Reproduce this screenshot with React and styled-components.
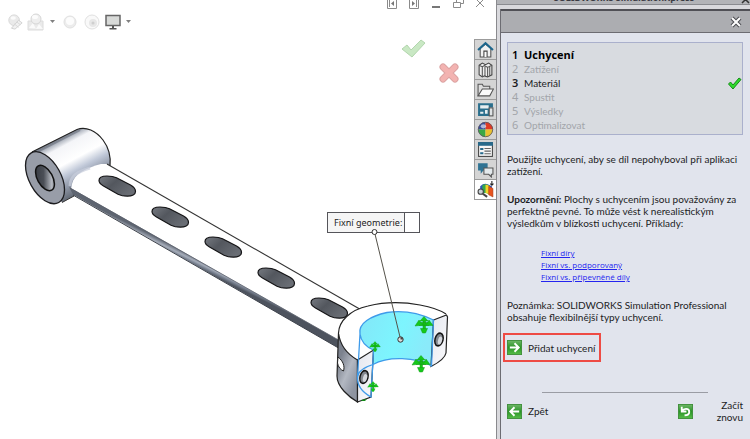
import { useState } from 'react';
import styled, { createGlobalStyle, css } from 'styled-components';

const GlobalStyle = createGlobalStyle`
  * {
    box-sizing: border-box;
  }
  body {
    margin: 0;
    background: #fff;
    color: #1c1c24;
    font-family: Lato, 'Noto Sans', sans-serif;
    font-size: 10px;
  }
  button {
    margin: 0;
    padding: 0;
    border: 0;
    background: none;
    color: inherit;
    font: inherit;
    cursor: pointer;
  }
  svg {
    display: block;
  }
`;

const Page = styled.div`
  display: flex;
  min-height: 100vh;
  overflow: hidden;
`;

const Workspace = styled.main`
  flex: 1;
  display: flex;
  flex-direction: column;
  min-width: 0;
`;

const TopBar = styled.header`
  display: flex;
  justify-content: space-between;
  height: 39px;
`;

const ViewTools = styled.div`
  display: flex;
  align-items: center;
  padding: 4px 0 0 7px;
`;

const ViewTool = styled.button`
  display: flex;
  align-items: center;
  margin-right: ${(props) => props.$gap || 4}px;
  opacity: ${(props) => (props.$faded ? 0.4 : 1)};
`;

const WindowTools = styled.div`
  display: flex;
  align-items: flex-start;
  gap: 8px;
  padding-right: 8px;
`;

const Body = styled.div`
  flex: 1;
  display: flex;
`;

const Canvas = styled.section`
  position: relative;
  flex: 1;
  min-width: 0;
`;

const Model = styled.svg`
  position: absolute;
  top: 0;
  left: 0;
`;

const Confirm = styled.button`
  position: absolute;
  top: ${(props) => props.$top}px;
  left: ${(props) => props.$left}px;
`;

const Callout = styled.label`
  position: absolute;
  top: 173px;
  left: 327px;
  display: flex;
  align-items: center;
  height: 21px;
  padding-left: 6px;
  border: 1px solid #55555a;
  background: #f5f5f5;
  font-family: 'Noto Sans', sans-serif;
  font-size: 9px;
  white-space: nowrap;
`;

const CalloutInput = styled.input`
  align-self: stretch;
  width: 15px;
  margin-left: 2px;
  padding: 0;
  border: 0;
  border-left: 1px solid #55555a;
  background: #fff;
  font: inherit;
  outline: none;
`;

const Leader = styled(Model)`
  pointer-events: none;
`;

const Tabs = styled.nav`
  display: flex;
  flex-direction: column;
  width: 22px;
`;

const Tab = styled.button`
  display: flex;
  align-items: center;
  justify-content: center;
  height: 20px;
  border: 1px solid #9b9b9b;
  border-bottom: 0;
  border-right: 0;
  background: #d5d5d5;
  ${(props) =>
    props.$active &&
    css`
      height: 21px;
      border-bottom: 1px solid #9b9b9b;
      background: #fff;
    `}
`;

const Panel = styled.aside`
  display: flex;
  flex-direction: column;
  width: 254px;
  border-left: 1px solid #8a8a8e;
  background: #d9d9dd;
`;

const PanelTitle = styled.div`
  display: flex;
  align-items: flex-end;
  height: 5px;
  border-bottom: 1px solid #8a8b90;
  background: #b3b4b8;
  color: #3a3a42;
  font-family: 'Noto Sans', sans-serif;
  font-size: 9px;
  font-weight: 700;
  line-height: 12px;
  overflow: hidden;
`;

const PanelName = styled.span`
  flex: 1;
  padding-left: 10px;
  text-align: center;
`;

const PanelFrame = styled.div`
  flex: 1;
  display: flex;
  flex-direction: column;
  margin: 4px 0 0 3px;
  border-left: 1px solid #6c6c72;
  background: #e1e4ed;
`;

const PanelHead = styled.div`
  display: flex;
  align-items: center;
  justify-content: flex-end;
  height: 24px;
  padding-right: 8px;
  border-top: 2px solid #505056;
  border-bottom: 1px solid #6c6c72;
  background: #acadb1;
`;

const PanelBody = styled.div`
  display: flex;
  flex-direction: column;
  padding: 9px 7px 0 6px;
  line-height: 12px;
`;

const Steps = styled.ol`
  margin: 0 0 18px;
  padding: 5px 0 2px 4px;
  border: 1px solid #aab0cc;
  background: #d8dbe0;
  list-style: none;
`;

const Step = styled.li`
  display: flex;
  align-items: center;
  height: 14px;
  color: ${(props) => (props.$enabled ? '#1c1c24' : '#a2a5aa')};
  ${(props) =>
    props.$current &&
    css`
      color: #000;
      font-family: 'Open Sans', sans-serif;
      font-size: 11px;
      font-weight: 700;
    `}
`;

const StepNumber = styled.span`
  width: 12px;
  font-family: 'Noto Sans', sans-serif;
  font-size: 11px;
  font-weight: ${(props) => (props.$strong ? 600 : 400)};
`;

const StepName = styled.span`
  flex: 1;
`;

const Text = styled.p`
  margin: 0 0 ${(props) => props.$gap || 16}px;
`;

const Links = styled.div`
  display: flex;
  flex-direction: column;
  align-items: flex-start;
  margin: 2px 0 16px 34px;
`;

const HelpLink = styled.a`
  color: #2424f0;
  font-family: 'Open Sans', sans-serif;
  font-size: 8px;
`;

const Action = styled.button`
  display: flex;
  align-items: center;
  gap: 6px;
  text-align: right;
`;

const Highlighted = styled(Action)`
  align-self: flex-start;
  height: 29px;
  margin-left: -4px;
  padding: 0 4px 0 2px;
  border: 2px solid #ee4b44;
`;

const Divider = styled.hr`
  width: 70%;
  margin: 30px auto 6px;
  border: 0;
  border-top: 1px solid #9a9ca4;
`;

const Footer = styled.footer`
  display: flex;
  align-items: center;
  justify-content: space-between;
`;

const RestartLabel = styled.span`
  width: 44px;
`;

const Dropdown = () => (
  <svg width="5" height="3" viewBox="0 0 5 3">
    <path d="M0 0h5L2.5 3z" fill="#808080" />
  </svg>
);

const AppearanceIcon = () => (
  <svg width="16" height="18" viewBox="0 0 18 18">
    <circle cx="8" cy="7" r="6" fill="#ccc" stroke="#999" />
    <ellipse cx="7" cy="4.500" rx="3" ry="2" fill="#f6f6f6" />
    <path d="M5 16l8-9 4 3-8 7z" fill="#ddd" stroke="#888" />
    <path d="M8 11l5 4M11 9l4 3" stroke="#999" />
  </svg>
);

const SceneIcon = () => (
  <svg width="18" height="18" viewBox="0 0 18 18">
    <path d="M1 8h15v9H1z" fill="#ccc" stroke="#aaa" />
    <path d="M2 15l4-5 3 6 3-5 4 5z" fill="#f4f4f4" />
    <circle cx="9" cy="6" r="5" fill="#d6d6d6" stroke="#999" />
    <ellipse cx="8" cy="4" rx="3" ry="2" fill="#fafafa" />
  </svg>
);

const SphereIcon = ({ ring }) => (
  <svg width="16" height="16" viewBox="0 0 16 16">
    <circle cx="8" cy="8" r={ring ? 7 : 6} fill={ring ? '#f2f2f2' : '#d2d2d2'} stroke="#b4b4b4" />
    <circle cx={ring ? 9 : 8} cy={ring ? 9 : 7} r="4" fill={ring ? '#c4c4c4' : '#fafafa'} />
    {ring && <circle cx="9" cy="9" r="1.500" fill="#888" />}
  </svg>
);

const MonitorIcon = () => (
  <svg width="16" height="16" viewBox="0 0 16 16">
    <rect x="1" y="1.500" width="14" height="10" fill="#d8dad8" stroke="#666" strokeWidth="1.500" />
    <path d="M7 12h2v2h2.500v1.500h-7V14H7z" fill="#555" />
  </svg>
);

const windowIcons = [
  ['Panel vlevo', 'M1.500 -3v11.500h9V-3M3.500 -2v9', 'M8 1v5L5 3.500z'],
  ['Panel vpravo', 'M1.500 -3v11.500h9V-3M8.500 -2v9', 'M4 1v5l3-2.500z'],
  ['Minimalizovat', '', 'M2 6h8v2H2z'],
  ['Obnovit', 'M1.500 2.500h7v5h-7zM4.500 2.500v-4h7v5h-3', ''],
  ['Zavřít', 'M2-1l8 8M10-1L2 7', ''],
];

const tabs = [
  {
    name: 'Prostředky',
    icon: (
      <>
        <path d="M3 7v8h10V7L8 3z" fill="#f2f2f2" stroke="#555" />
        <path d="M1 8.500L8 2l7 6.500" fill="none" stroke="#1e668c" strokeWidth="2" />
        <path d="M6.500 15V9.500h3V15" fill="#fff" stroke="#444" />
      </>
    ),
  },
  {
    name: 'Knihovna návrhů',
    icon: (
      <>
        <path d="M2 4l3-2 3 1.500L11 2l3 2v9l-4 2-3-1-2 1-3-2z" fill="#efefef" stroke="#444" />
        <path d="M2 4l3 1.500V15M5 5.500L8 3.500M8 5l2 1V15M10 6l4-2M7.500 5v9M12 5v9" fill="none" stroke="#555" />
      </>
    ),
  },
  {
    name: 'Průzkumník',
    icon: (
      <>
        <path d="M1 14V3h4l1 2h6v3" fill="#ddd" stroke="#555" />
        <path d="M1 14L5 7.500h10.500L12 14z" fill="#fafafa" stroke="#555" />
      </>
    ),
  },
  {
    name: 'Paleta pohledů',
    icon: (
      <>
        <path d="M1 2h14v4h-3v8H1z" fill="#2b6f8d" />
        <path d="M3 4h8v3H3zM3 10h3v2H3zM7.500 8.500H10V12H7.500z" fill="#e8eef0" />
        <rect x="11.500" y="6.500" width="3.500" height="7.500" fill="#dfe3e5" stroke="#555" />
      </>
    ),
  },
  {
    name: 'Vzhledy',
    icon: (
      <>
        <path d="M8 8V1a7 7 0 0 0-7 7z" fill="#3a4f9d" />
        <path d="M8 8V1a7 7 0 0 1 7 7z" fill="#e03a24" />
        <path d="M8 8H1a7 7 0 0 0 7 7z" fill="#3aa845" />
        <path d="M8 8h7a7 7 0 0 1-7 7z" fill="#e9c22f" />
        <ellipse cx="6" cy="5" rx="2.500" ry="2" fill="#fff" opacity="0.6" />
        <circle cx="8" cy="8" r="6.800" fill="none" stroke="#5b5560" strokeWidth="0.800" />
      </>
    ),
  },
  {
    name: 'Vlastnosti',
    icon: (
      <>
        <rect x="1.500" y="1.500" width="13" height="13" fill="#f6f6f6" stroke="#444" />
        <path d="M1 1h14v3.500H1z" fill="#276a8c" />
        <path d="M7 7h6M7 9.500h6M7 12h6" stroke="#666" />
        <path d="M3 6.500h3v2H3zM3 10.500h3v2H3z" fill="#276a8c" />
      </>
    ),
  },
  {
    name: 'Fórum',
    icon: (
      <>
        <path d="M1 2h9v7H6l-2.500 3V9H1z" fill="#2f7393" />
        <path d="M6.500 6.500h8.500v6h-1.500V15L11 12.500H6.500z" fill="#e4eaed" stroke="#555" />
      </>
    ),
  },
  {
    name: 'SimulationXpress',
    icon: (
      <>
        <path d="M3 5C6 2 9 2 12 4l2 1v8l-3-1c-3-2-5-1-8 0z" fill="#2d55b8" />
        <path d="M5 4c2-1.500 5-1 7 1v8C9 11 7 11 5 12z" fill="#35a84a" />
        <path d="M8 3.500c2 0 3 .5 4 1.500v8c-1-1-2-1.500-4-1.500z" fill="#f1d22a" />
        <path d="M11 5l4 2v8l-4-2z" fill="#e8541f" stroke="#a33712" strokeWidth="0.500" />
        <path d="M14 0v4M12.500 2.500L14 4l1.500-1.500" fill="none" stroke="#222" />
        <circle cx="3.500" cy="10" r="2.500" fill="#c9d1d6" stroke="#444" />
        <path d="M5.500 12l4 3" stroke="#444" strokeWidth="2" />
      </>
    ),
  },
];

const actionPaths = {
  next: 'M3 8h9M8 3.500L12.500 8L8 12.500',
  back: 'M13 8H4M8 3.500L3.500 8L8 12.500',
  undo: 'M4 3v5h5M4 7.500C6 4.500 12 4 12 8.500c0 2.500-2 3.500-5 3.500',
};

const ActionIcon = ({ kind }) => (
  <svg width="15" height="15" viewBox="0 0 16 16">
    <defs>
      <linearGradient id={`green-${kind}`} x1="0" y1="0" x2="0" y2="1">
        <stop offset="0" stopColor="#6fb768" />
        <stop offset="0.500" stopColor="#2b9427" />
        <stop offset="1" stopColor="#57bd49" />
      </linearGradient>
    </defs>
    <rect x="0.500" y="0.500" width="15" height="15" fill={`url(#green-${kind})`} stroke="#3f8f3b" />
    <path d={actionPaths[kind]} fill="none" stroke="#fff" strokeWidth="2" />
  </svg>
);

const Fixture = ({ x, y, small }) => (
  <g transform={`translate(${x} ${y}) scale(${small ? 0.6 : 1})`} fill="#14c91a" stroke="#149a18" strokeWidth="0.500">
    <path d="M-1-5h2.500v5H-1zM-5-1.500H5v3H-5zM-1 1h2.500v5H-1z" />
    <path d="M0-7.500l4 4.500h-8zM-9 2l4-6 4 5zM9 1.500L5-4 2 1.500zM-3.500 4.500h7L1.500 9h-3z" />
  </g>
);

const slots = [
  [117, 186],
  [170, 217],
  [223, 247],
  [276, 278],
  [329, 308],
];

const PartModel = () => (
  <Model width="475" height="400" viewBox="0 39 475 400" role="img" aria-label="Model dílu">
    <defs>
      <linearGradient id="barrel" gradientUnits="userSpaceOnUse" x1="55" y1="138" x2="84" y2="192">
        <stop offset="0" stopColor="#555b66" />
        <stop offset="0.080" stopColor="#a9afba" />
        <stop offset="0.180" stopColor="#f4f5f8" />
        <stop offset="0.450" stopColor="#ffffff" />
        <stop offset="0.620" stopColor="#c0c8d8" />
        <stop offset="0.800" stopColor="#8f97a6" />
        <stop offset="1" stopColor="#5d646f" />
      </linearGradient>
      <linearGradient id="bore" x1="0" y1="0" x2="1" y2="1">
        <stop offset="0" stopColor="#30343b" />
        <stop offset="0.450" stopColor="#4b4f57" />
        <stop offset="0.750" stopColor="#b4b8c0" />
        <stop offset="1" stopColor="#5b5f67" />
      </linearGradient>
      <linearGradient id="slot" x1="0" y1="0" x2="1" y2="0.600">
        <stop offset="0" stopColor="#777b82" />
        <stop offset="0.450" stopColor="#53575e" />
        <stop offset="1" stopColor="#696d74" />
      </linearGradient>
      <linearGradient id="side" gradientUnits="userSpaceOnUse" x1="200" y1="259" x2="196" y2="267">
        <stop offset="0" stopColor="#5e6571" />
        <stop offset="0.450" stopColor="#a6adba" />
        <stop offset="0.700" stopColor="#77808f" />
        <stop offset="1" stopColor="#4d535e" />
      </linearGradient>
      <linearGradient id="clamp" gradientUnits="userSpaceOnUse" x1="337" y1="365" x2="360" y2="375">
        <stop offset="0" stopColor="#7c828e" />
        <stop offset="0.500" stopColor="#b3b8c2" />
        <stop offset="1" stopColor="#8e94a1" />
      </linearGradient>
      <linearGradient id="face" x1="0" y1="0" x2="1" y2="1">
        <stop offset="0" stopColor="#e4e7ef" />
        <stop offset="1" stopColor="#fafafc" />
      </linearGradient>
      <linearGradient id="selected" x1="0" y1="0" x2="1" y2="0.300">
        <stop offset="0" stopColor="#83e6f8" />
        <stop offset="0.600" stopColor="#7df5fe" />
        <stop offset="1" stopColor="#8aeafa" />
      </linearGradient>
    </defs>

    <path
      d="M32 152L77 129.500C86 126 96 131 103 140C109 148 111 157 110 166L100 175L74 196L62 202.500Z"
      fill="url(#barrel)"
    />
    <path d="M32 152L77 129.500C86 126 96 131 103 140C109 148 111 157 110 166" fill="none" stroke="#222" strokeWidth="1.200" />
    <path d="M37 152L80 130" stroke="#6c727e" strokeWidth="2" opacity="0.6" />
    <path d="M62 202.500L74 196" stroke="#333" />

    <path d="M72 184C74 174 86 168 101 164L107 164L364 311L342 343L71 189Z" fill="#fff" />
    <path d="M70 186C70 177 76 172 90 168" fill="none" stroke="#c9cfdd" strokeWidth="3" opacity="0.7" />
    <path d="M107 164L364 311.500" stroke="#333" strokeWidth="1.100" />
    <path d="M69 187L342 342V350L73 194.500Z" fill="url(#side)" />
    <path d="M73 195L342 350" stroke="#3d424b" />
    <path d="M70 188L342 342" stroke="#5a606b" strokeWidth="0.800" />

    <ellipse cx="45" cy="177.700" rx="15.800" ry="28.400" transform="rotate(-29 45 177.700)" fill="#989da8" stroke="#1c1c1f" strokeWidth="1.300" />
    <ellipse cx="45" cy="178" rx="7.600" ry="13.800" transform="rotate(-29 45 178)" fill="url(#bore)" stroke="#111" strokeWidth="1.500" />

    {slots.map(([x, y]) => (
      <path
        key={x}
        transform={`translate(${x} ${y})`}
        d="M-18-5.500C-18-8.500-15-10-10-10C-5.500-10-3.500-9.700-.5-8.200L13.500-1C17 1 18.500 3 18.500 5.500C18.500 8.500 15 10.200 10.500 10.200C6.500 10.200 4 9.700 1 8.200L-13.500 0C-16.500-1.700-18-3.200-18-5.500Z"
        fill="url(#slot)"
        stroke="#151517"
        strokeWidth="1.200"
      />
    ))}

    <path
      d="M338.500 333C339 321 350 310 368 306C384 302 404 302 420 305C431 307 440 310 446 314L447.500 317L446 353C445 358 438 363 431 366.500C416 357 388 356 373 365L371 397L357 402C348 398 337 387 337 376Z"
      fill="#fff"
    />
    <path
      d="M338.500 333C340 345 347 354 357.500 360V402C349 397 337 387 337 376Z"
      fill="url(#clamp)"
      stroke="#222"
      strokeWidth="1.200"
    />
    <path d="M338 357C343 361 345 366 343.500 371C341 370 338 367 337.500 363Z" fill="#fff" stroke="#222" />
    <path
      d="M360 334C358 323 371 316 387 312.500C404 310 421 314 433.500 320L431.500 366C416 357 388 356 373 364.500V350C366 347 361 341 360 334Z"
      fill="url(#selected)"
    />
    <path d="M357.500 360L373.500 350L371 397L357.500 402Z" fill="url(#face)" stroke="#222" strokeWidth="1.200" />
    <path d="M433.500 320L446.500 315L447.500 317L446 353C445 358 438 363 431 366.500Z" fill="url(#face)" stroke="#222" strokeWidth="1.200" />
    <path
      d="M338.500 333C339 321 350 310 368 306C384 302 404 302 420 305C431 307 440 310 446 314"
      fill="none"
      stroke="#222"
      strokeWidth="1.200"
    />
    <path
      d="M360 334C358 323 371 316 387 312.500C404 310 421 314 433.500 320L431.500 366C416 357 388 356 373 364.500M373.500 350C366 347 361 341 360 334L357.500 377C357 385 362 392 371 397L373.500 350M357.500 377C358 371 365 367 373 364.500"
      fill="none"
      stroke="#3f9bea"
      strokeWidth="1.300"
    />
    <ellipse cx="439" cy="339.500" rx="4" ry="6.500" transform="rotate(15 439 339.500)" fill="#83878f" stroke="#151515" strokeWidth="1.500" />
    <ellipse cx="440" cy="340.500" rx="2" ry="4" transform="rotate(15 440 340.500)" fill="#d5d8de" />
    <ellipse cx="364" cy="377" rx="4" ry="6.500" transform="rotate(15 364 377)" fill="#83878f" stroke="#151515" strokeWidth="1.500" />
    <ellipse cx="365" cy="378" rx="2" ry="4" transform="rotate(15 365 378)" fill="#d5d8de" />
    <Fixture x={424} y={324} />
    <Fixture x={421} y={363} />
    <Fixture x={375} y={346} small />
    <Fixture x={373} y={386} small />
    <path d="M361 400l6-1-2 2h-3z" fill="#138a18" />
  </Model>
);

const steps = [
  { name: 'Uchycení', current: true, enabled: true },
  { name: 'Zatížení' },
  { name: 'Materiál', enabled: true, done: true },
  { name: 'Spustit' },
  { name: 'Výsledky' },
  { name: 'Optimalizovat' },
];

const CheckIcon = () => (
  <svg width="15" height="13" viewBox="0 0 15 13">
    <path d="M1.500 7L3.500 5L6 8L12 1L14 2.500L6 12Z" fill="#2fdc2c" stroke="#178a1a" />
  </svg>
);

const SimulationPanel = () => (
  <Panel>
    <PanelTitle>
      <PanelName>SOLIDWORKS SimulationXpress</PanelName>
      <svg width="9" height="9" viewBox="0 0 9 9">
        <path d="M1 1l7 7M8 1L1 8" stroke="#333" strokeWidth="1.500" />
      </svg>
    </PanelTitle>
    <PanelFrame>
      <PanelHead>
        <button aria-label="Zavřít panel">
          <svg width="12" height="12" viewBox="0 0 12 12">
            <path d="M2 2l8 8M10 2l-8 8" stroke="#4c4d52" strokeWidth="4" />
            <path d="M2 2l8 8M10 2l-8 8" stroke="#fff" strokeWidth="2" />
          </svg>
        </button>
      </PanelHead>
      <PanelBody>
        <Steps>
          {steps.map((step, index) => (
            <Step key={step.name} $enabled={step.enabled} $current={step.current}>
              <StepNumber $strong={step.enabled}>{index + 1}</StepNumber>
              <StepName>{step.name}</StepName>
              {step.done && <CheckIcon />}
            </Step>
          ))}
        </Steps>
        <Text>Použijte uchycení, aby se díl nepohyboval při aplikaci zatížení.</Text>
        <Text>
          <b>Upozornění:</b> Plochy s uchycením jsou považovány za perfektně pevné. To může vést k
          nerealistickým výsledkům v blízkosti uchycení. Příklady:
        </Text>
        <Links>
          <HelpLink href="#diry">Fixní díry</HelpLink>
          <HelpLink href="#podporovany">Fixní vs. podporovaný</HelpLink>
          <HelpLink href="#pripevnene">Fixní vs. připevněné díly</HelpLink>
        </Links>
        <Text $gap={10}>
          Poznámka: SOLIDWORKS Simulation Professional obsahuje flexibilnější typy uchycení.
        </Text>
        <Highlighted>
          <ActionIcon kind="next" />
          Přidat uchycení
        </Highlighted>
        <Divider />
        <Footer>
          <Action>
            <ActionIcon kind="back" />
            Zpět
          </Action>
          <Action>
            <ActionIcon kind="undo" />
            <RestartLabel>Začít znovu</RestartLabel>
          </Action>
        </Footer>
      </PanelBody>
    </PanelFrame>
  </Panel>
);

const App = () => {
  const [value, setValue] = useState('');

  return (
    <Page>
      <GlobalStyle />
      <Workspace>
        <TopBar>
          <ViewTools>
            <ViewTool $faded aria-label="Upravit vzhled"><AppearanceIcon /></ViewTool>
            <ViewTool $faded $gap={5} aria-label="Použít scénu"><SceneIcon /></ViewTool>
            <ViewTool $gap={7} aria-label="Další scény"><Dropdown /></ViewTool>
            <ViewTool $faded $gap={6} aria-label="Stíny"><SphereIcon /></ViewTool>
            <ViewTool $faded $gap={5} aria-label="Okluze"><SphereIcon ring /></ViewTool>
            <ViewTool $gap={5} aria-label="Nastavení pohledu"><MonitorIcon /></ViewTool>
            <ViewTool aria-label="Další nastavení"><Dropdown /></ViewTool>
          </ViewTools>
          <WindowTools>
            {windowIcons.map(([name, line, fill]) => (
              <button key={name} aria-label={name}>
                <svg width="14" height="10" viewBox="0 0 14 10">
                  <path d={line} fill="none" stroke="#8b8b8b" />
                  <path d={fill} fill="#777" />
                </svg>
              </button>
            ))}
          </WindowTools>
        </TopBar>
        <Body>
          <Canvas>
            <PartModel />
            <Confirm $top={0} $left={400} aria-label="Potvrdit">
              <svg width="26" height="20" viewBox="0 0 26 20">
                <path d="M2 10l5-4 4 5L21 1l4 3L12 18z" fill="#c9e8c4" stroke="#b2d6ad" />
              </svg>
            </Confirm>
            <Confirm $top={23} $left={438} aria-label="Zrušit">
              <svg width="22" height="22" viewBox="0 0 22 22">
                <path d="M5 5l12 12M17 5L5 17" stroke="#dba3a2" strokeWidth="7" strokeLinecap="round" />
                <path d="M5 5l12 12M17 5L5 17" stroke="#f3b3b1" strokeWidth="5" strokeLinecap="round" />
              </svg>
            </Confirm>
            <Callout>
              Fixní geometrie:
              <CalloutInput value={value} onChange={(e) => setValue(e.target.value)} />
            </Callout>
            <Leader width="475" height="400" viewBox="0 39 475 400" aria-hidden="true">
              <path d="M374.500 232L400.500 339" stroke="#55524a" />
              <circle cx="374.500" cy="232" r="2.500" fill="#fff" stroke="#333" />
              <circle cx="400.500" cy="339.500" r="2.700" fill="#ddd" stroke="#333" />
              <path d="M400.500 339.500v-2.500a2.500 2.500 0 0 1 2.500 2.500z" fill="#444" />
            </Leader>
          </Canvas>
          <Tabs>
            {tabs.map(({ name, icon }) => (
              <Tab key={name} aria-label={name} $active={name === 'SimulationXpress'}>
                <svg width="17" height="17" viewBox="0 0 16 16">{icon}</svg>
              </Tab>
            ))}
          </Tabs>
        </Body>
      </Workspace>
      <SimulationPanel />
    </Page>
  );
};

export default App;
